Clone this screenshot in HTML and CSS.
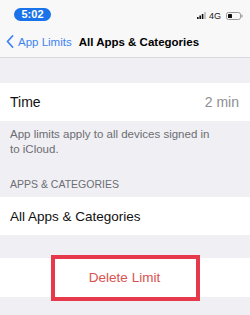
FILE: index.html
```html
<!DOCTYPE html>
<html>
<head>
<meta charset="utf-8">
<link rel="stylesheet" href="styles.css">
</head>
<body>
<div class="screen">
  <div class="status">
    <span class="clock">5:02</span>
    <div class="status-right">
      <svg class="signal" width="9" height="7" viewBox="0 0 9 7">
        <rect x="0" y="5" width="1.6" height="2" fill="#111"/>
        <rect x="2.4" y="3.5" width="1.6" height="3.5" fill="#111"/>
        <rect x="4.8" y="2" width="1.6" height="5" fill="#111"/>
        <rect x="7.2" y="0" width="1.6" height="7" fill="#bbb"/>
      </svg>
      <span class="net">4G</span>
      <svg class="battery" width="17" height="8" viewBox="0 0 17 8">
        <rect x="0.5" y="0.5" width="14" height="7" rx="2" fill="none" stroke="#999" stroke-width="1"/>
        <rect x="2" y="2" width="4" height="4" rx="0.6" fill="#111"/>
        <rect x="15.3" y="2.6" width="1.2" height="2.8" rx="0.5" fill="#999"/>
      </svg>
    </div>
  </div>
  <div class="nav">
    <svg class="chev" width="8" height="13" viewBox="0 0 8 13">
      <path d="M6.5 1 L1.5 6.5 L6.5 12" fill="none" stroke="#3d84f2" stroke-width="1.8" stroke-linecap="round" stroke-linejoin="round"/>
    </svg>
    <span class="back">App Limits</span>
    <span class="title">All Apps &amp; Categories</span>
  </div>
  <div class="spacer-top"></div>
  <div class="row">
    <span class="label">Time</span>
    <span class="value">2 min</span>
  </div>
  <p class="note">App limits apply to all devices signed in to iCloud.</p>
  <div class="section-head">APPS &amp; CATEGORIES</div>
  <div class="row">
    <span class="label label-sm">All Apps &amp; Categories</span>
  </div>
  <div class="spacer-mid"></div>
  <div class="row row-delete">
    <span class="delete">Delete Limit</span>
    <span class="highlight"></span>
  </div>
</div>
</body>
</html>
```
FILE: styles.css
```css
* { box-sizing: border-box; }
html, body { margin: 0; padding: 0; }
body {
  font-family: "Liberation Sans", Arial, sans-serif;
  background: #efeff4;
  width: 250px;
  height: 315px;
  overflow: hidden;
}
.screen { width: 250px; }
.status {
  height: 28px;
  background: #f8f8f8;
  display: flex;
  align-items: center;
  justify-content: space-between;
  padding: 0 7px 0 14px;
}
.clock {
  background: #1a73e8;
  color: #fff;
  font-size: 11px;
  font-weight: bold;
  border-radius: 7px;
  width: 37px;
  height: 13px;
  line-height: 13px;
  text-align: center;
  margin-top: 0;
}
.status-right {
  display: flex;
  align-items: center;
  gap: 3px;
  margin-top: 3px;
}
.net { font-size: 9px; color: #222; margin-right: 2px; }
.nav {
  height: 30px;
  background: #f8f8f8;
  border-bottom: 1px solid #d8d8dc;
  display: flex;
  align-items: center;
  padding: 0 0 0 6px;
  padding-bottom: 2px;
}
.chev { margin-right: 4px; }
.back { color: #3d84f2; font-size: 11.5px; margin-right: 7px; }
.title { color: #000; font-size: 11.5px; font-weight: bold; }
.spacer-top { height: 25px; }
.row {
  background: #fff;
  height: 38px;
  display: flex;
  align-items: center;
  justify-content: space-between;
  padding: 0 11px 0 10px;
}
.label { font-size: 14px; color: #111; }
.label-sm { font-size: 13.5px; }
.value { font-size: 14px; color: #8e8e93; }
.note {
  margin: 0;
  padding: 6px 40px 0 10px;
  font-size: 11.5px;
  line-height: 15px;
  color: #6d6d72;
}
.section-head {
  padding: 21px 10px 6px 10px;
  font-size: 10.5px;
  line-height: 13px;
  color: #6d6d72;
}
.spacer-mid { height: 23px; }
.row-delete {
  position: relative;
  justify-content: center;
  height: 39px;
}
.delete { color: #d9534f; font-size: 13.5px; }
.highlight {
  position: absolute;
  left: 51px;
  top: -3px;
  width: 149px;
  height: 46px;
  border: 4px solid #e63a4c;
}
```
